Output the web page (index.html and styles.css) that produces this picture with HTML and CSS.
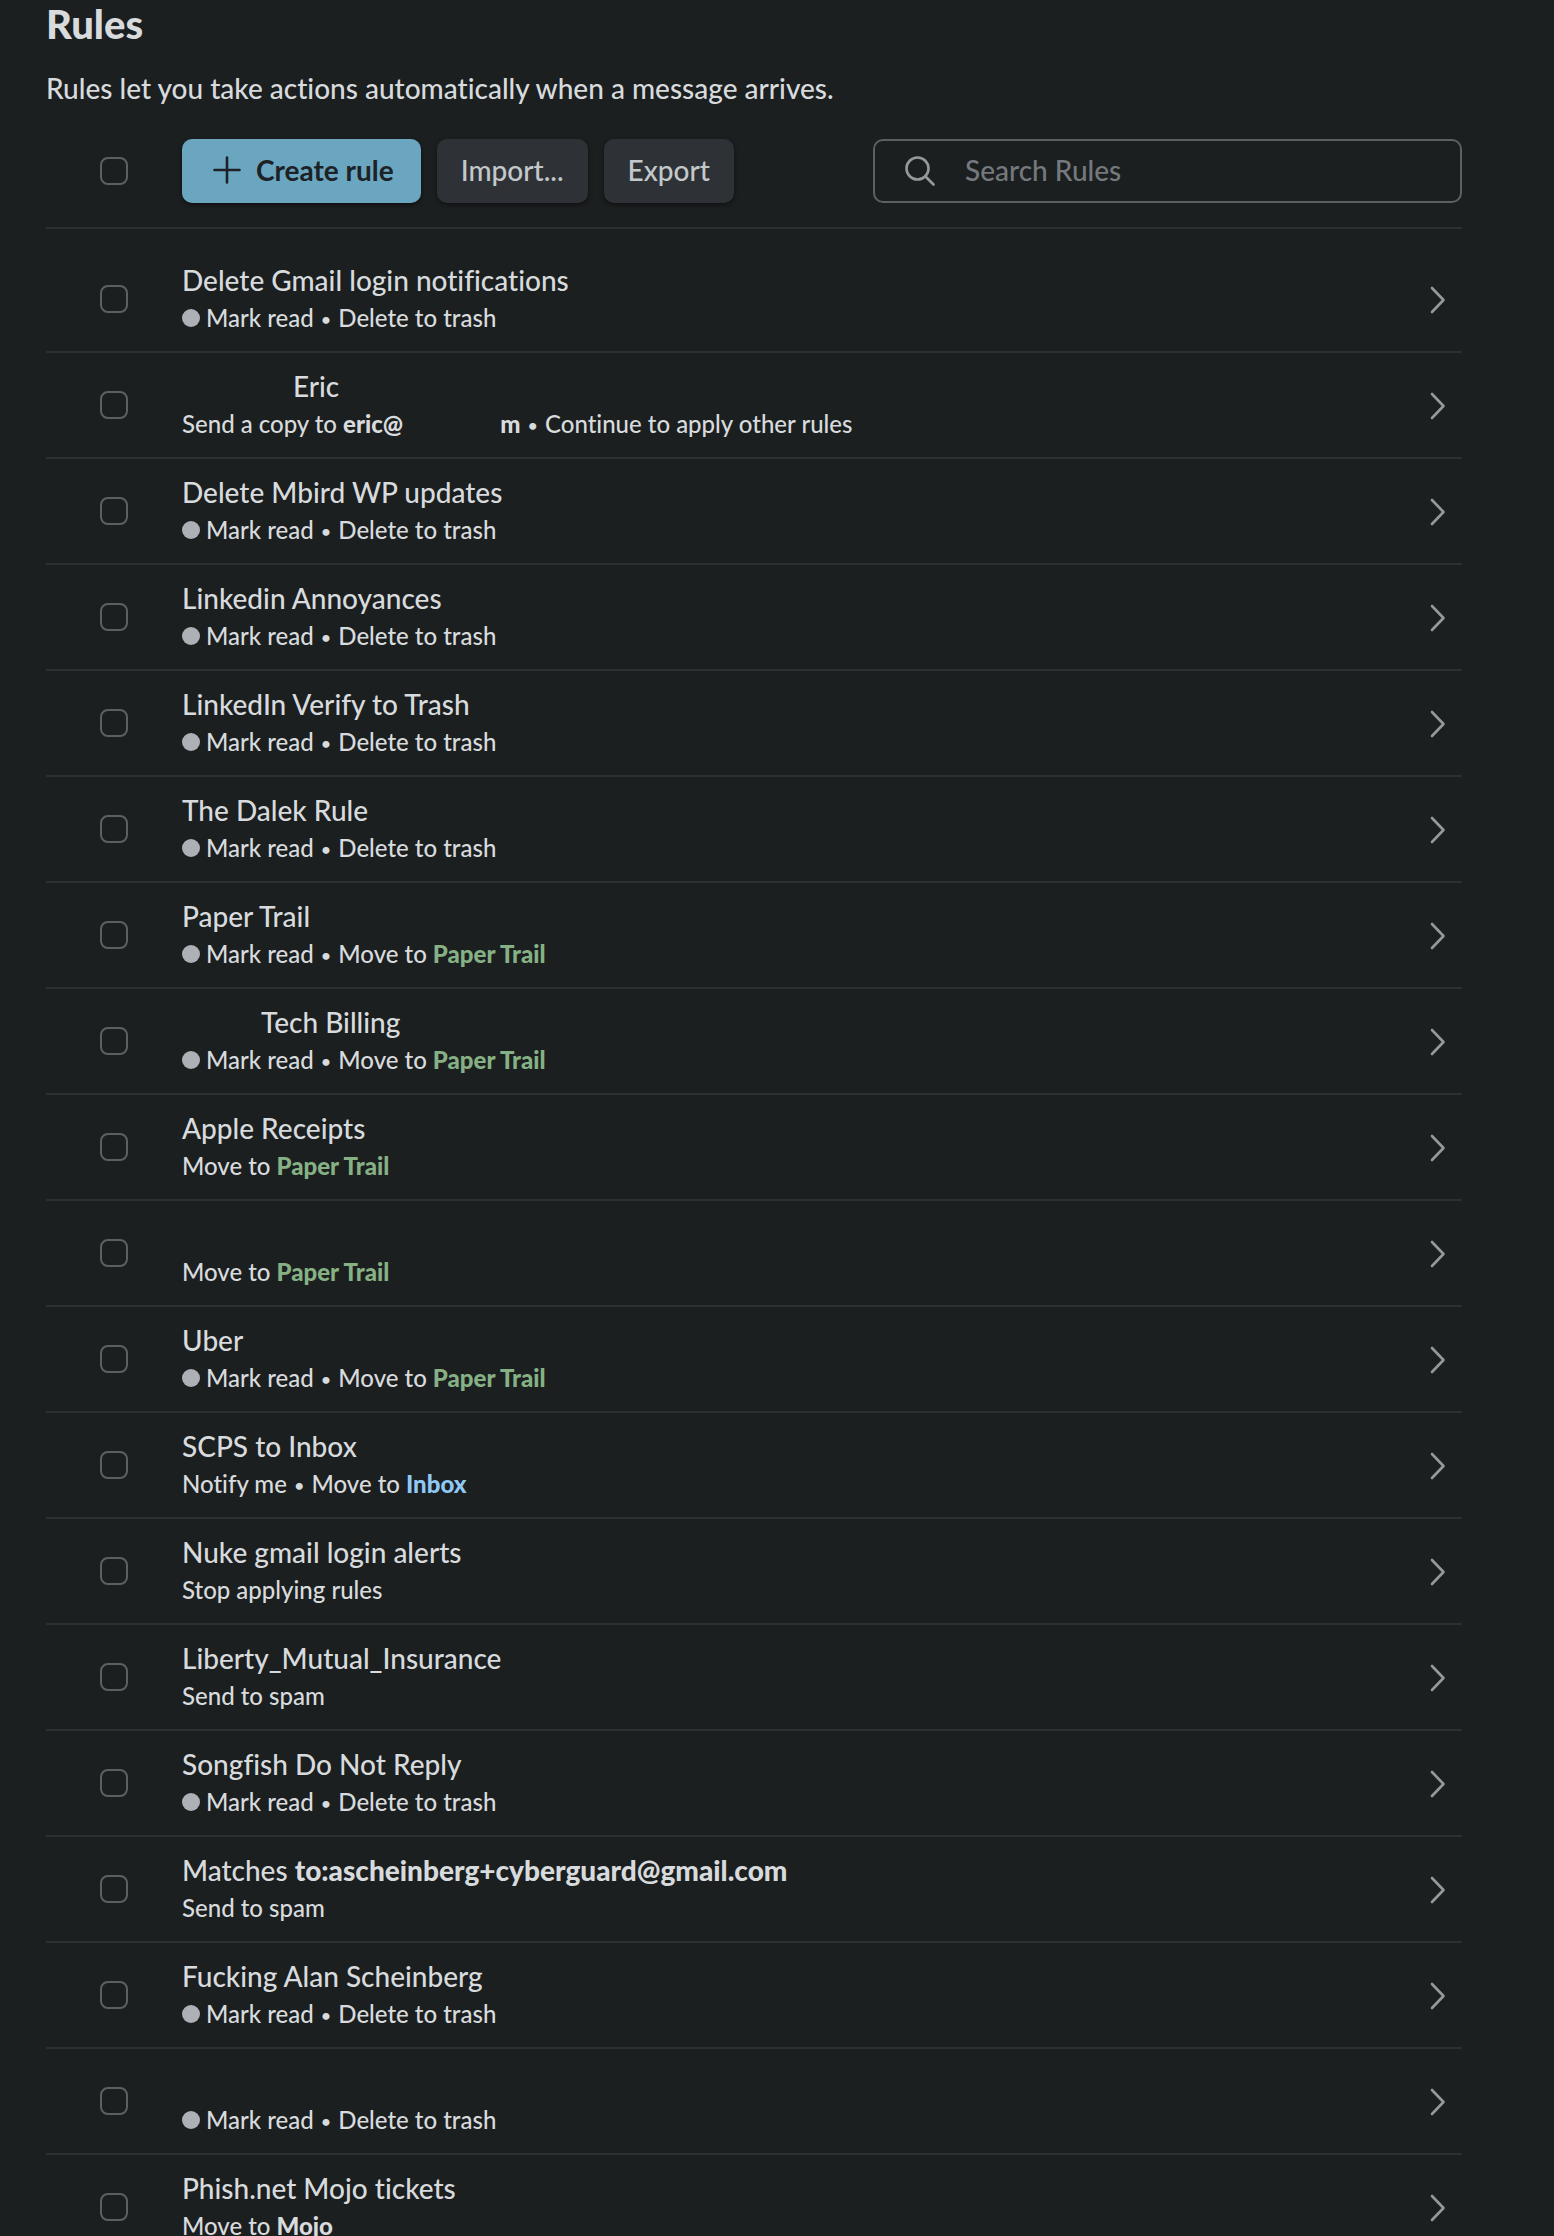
FILE: index.html
```html
<!DOCTYPE html>
<html lang="en">
<head>
    <meta charset="UTF-8">
    <meta name="viewport" content="width=device-width, initial-scale=1.0">
    <title>Rules</title>
    <link rel="stylesheet" href="styles.css">
</head>
<body>

    <!-- Shared icons -->
    <svg class="icon-defs" aria-hidden="true">
        <symbol id="chevron" viewBox="0 0 16 30">
            <path d="M2 4 L13.5 16 L2 28" fill="none" stroke="currentColor" stroke-width="2.6" stroke-linecap="round" stroke-linejoin="round"/>
        </symbol>
    </svg>

    <main class="settings">
        <h1>Rules</h1>
        <p class="intro">Rules let you take actions automatically when a message arrives.</p>

        <div class="toolbar">
            <input type="checkbox" class="check" aria-label="Select all rules">
            <div class="actions">
                <button type="button" class="btn btn-primary">
                    <svg class="plus" viewBox="0 0 28 28" aria-hidden="true">
                        <path d="M14 1.5 V26.5 M1.5 14 H26.5" fill="none" stroke="currentColor" stroke-width="2.6" stroke-linecap="round"/>
                    </svg>
                    Create rule
                </button>
                <button type="button" class="btn">Import...</button>
                <button type="button" class="btn">Export</button>
            </div>
            <label class="search">
                <svg class="search-icon" viewBox="0 0 30 30" aria-hidden="true">
                    <circle cx="12.5" cy="12.5" r="11" fill="none" stroke="currentColor" stroke-width="2.6"/>
                    <path d="M20.5 20.5 L28.5 28.5" fill="none" stroke="currentColor" stroke-width="2.6" stroke-linecap="round"/>
                </svg>
                <input type="search" placeholder="Search Rules" aria-label="Search Rules">
            </label>
        </div>

        <ul class="rules">
            <li class="rule">
                <input type="checkbox" class="check" aria-label="Select rule">
                <a href="#" class="rule-link">
                    <span class="rule-text">
                        <span class="name">Delete Gmail login notifications</span>
                        <span class="detail"><i class="dot"></i>Mark read <span class="sep">•</span> Delete to trash</span>
                    </span>
                    <svg class="chevron"><use href="#chevron"/></svg>
                </a>
            </li>
            <li class="rule">
                <input type="checkbox" class="check" aria-label="Select rule">
                <a href="#" class="rule-link">
                    <span class="rule-text">
                        <span class="name"><span class="blank blank-lg"></span>Eric</span>
                        <span class="detail">Send a copy to <b>eric@<span class="blank blank-md"></span>m</b> <span class="sep">•</span> Continue to apply other rules</span>
                    </span>
                    <svg class="chevron"><use href="#chevron"/></svg>
                </a>
            </li>
            <li class="rule">
                <input type="checkbox" class="check" aria-label="Select rule">
                <a href="#" class="rule-link">
                    <span class="rule-text">
                        <span class="name">Delete Mbird WP updates</span>
                        <span class="detail"><i class="dot"></i>Mark read <span class="sep">•</span> Delete to trash</span>
                    </span>
                    <svg class="chevron"><use href="#chevron"/></svg>
                </a>
            </li>
            <li class="rule">
                <input type="checkbox" class="check" aria-label="Select rule">
                <a href="#" class="rule-link">
                    <span class="rule-text">
                        <span class="name">Linkedin Annoyances</span>
                        <span class="detail"><i class="dot"></i>Mark read <span class="sep">•</span> Delete to trash</span>
                    </span>
                    <svg class="chevron"><use href="#chevron"/></svg>
                </a>
            </li>
            <li class="rule">
                <input type="checkbox" class="check" aria-label="Select rule">
                <a href="#" class="rule-link">
                    <span class="rule-text">
                        <span class="name">LinkedIn Verify to Trash</span>
                        <span class="detail"><i class="dot"></i>Mark read <span class="sep">•</span> Delete to trash</span>
                    </span>
                    <svg class="chevron"><use href="#chevron"/></svg>
                </a>
            </li>
            <li class="rule">
                <input type="checkbox" class="check" aria-label="Select rule">
                <a href="#" class="rule-link">
                    <span class="rule-text">
                        <span class="name">The Dalek Rule</span>
                        <span class="detail"><i class="dot"></i>Mark read <span class="sep">•</span> Delete to trash</span>
                    </span>
                    <svg class="chevron"><use href="#chevron"/></svg>
                </a>
            </li>
            <li class="rule">
                <input type="checkbox" class="check" aria-label="Select rule">
                <a href="#" class="rule-link">
                    <span class="rule-text">
                        <span class="name">Paper Trail</span>
                        <span class="detail"><i class="dot"></i>Mark read <span class="sep">•</span> Move to <b class="green">Paper Trail</b></span>
                    </span>
                    <svg class="chevron"><use href="#chevron"/></svg>
                </a>
            </li>
            <li class="rule">
                <input type="checkbox" class="check" aria-label="Select rule">
                <a href="#" class="rule-link">
                    <span class="rule-text">
                        <span class="name"><span class="blank blank-sm"></span>Tech Billing</span>
                        <span class="detail"><i class="dot"></i>Mark read <span class="sep">•</span> Move to <b class="green">Paper Trail</b></span>
                    </span>
                    <svg class="chevron"><use href="#chevron"/></svg>
                </a>
            </li>
            <li class="rule">
                <input type="checkbox" class="check" aria-label="Select rule">
                <a href="#" class="rule-link">
                    <span class="rule-text">
                        <span class="name">Apple Receipts</span>
                        <span class="detail">Move to <b class="green">Paper Trail</b></span>
                    </span>
                    <svg class="chevron"><use href="#chevron"/></svg>
                </a>
            </li>
            <li class="rule">
                <input type="checkbox" class="check" aria-label="Select rule">
                <a href="#" class="rule-link">
                    <span class="rule-text">
                        <span class="name"></span>
                        <span class="detail">Move to <b class="green">Paper Trail</b></span>
                    </span>
                    <svg class="chevron"><use href="#chevron"/></svg>
                </a>
            </li>
            <li class="rule">
                <input type="checkbox" class="check" aria-label="Select rule">
                <a href="#" class="rule-link">
                    <span class="rule-text">
                        <span class="name">Uber</span>
                        <span class="detail"><i class="dot"></i>Mark read <span class="sep">•</span> Move to <b class="green">Paper Trail</b></span>
                    </span>
                    <svg class="chevron"><use href="#chevron"/></svg>
                </a>
            </li>
            <li class="rule">
                <input type="checkbox" class="check" aria-label="Select rule">
                <a href="#" class="rule-link">
                    <span class="rule-text">
                        <span class="name">SCPS to Inbox</span>
                        <span class="detail">Notify me <span class="sep">•</span> Move to <b class="blue">Inbox</b></span>
                    </span>
                    <svg class="chevron"><use href="#chevron"/></svg>
                </a>
            </li>
            <li class="rule">
                <input type="checkbox" class="check" aria-label="Select rule">
                <a href="#" class="rule-link">
                    <span class="rule-text">
                        <span class="name">Nuke gmail login alerts</span>
                        <span class="detail">Stop applying rules</span>
                    </span>
                    <svg class="chevron"><use href="#chevron"/></svg>
                </a>
            </li>
            <li class="rule">
                <input type="checkbox" class="check" aria-label="Select rule">
                <a href="#" class="rule-link">
                    <span class="rule-text">
                        <span class="name">Liberty_Mutual_Insurance</span>
                        <span class="detail">Send to spam</span>
                    </span>
                    <svg class="chevron"><use href="#chevron"/></svg>
                </a>
            </li>
            <li class="rule">
                <input type="checkbox" class="check" aria-label="Select rule">
                <a href="#" class="rule-link">
                    <span class="rule-text">
                        <span class="name">Songfish Do Not Reply</span>
                        <span class="detail"><i class="dot"></i>Mark read <span class="sep">•</span> Delete to trash</span>
                    </span>
                    <svg class="chevron"><use href="#chevron"/></svg>
                </a>
            </li>
            <li class="rule">
                <input type="checkbox" class="check" aria-label="Select rule">
                <a href="#" class="rule-link">
                    <span class="rule-text">
                        <span class="name">Matches <b>to:ascheinberg+cyberguard@gmail.com</b></span>
                        <span class="detail">Send to spam</span>
                    </span>
                    <svg class="chevron"><use href="#chevron"/></svg>
                </a>
            </li>
            <li class="rule">
                <input type="checkbox" class="check" aria-label="Select rule">
                <a href="#" class="rule-link">
                    <span class="rule-text">
                        <span class="name">Fucking Alan Scheinberg</span>
                        <span class="detail"><i class="dot"></i>Mark read <span class="sep">•</span> Delete to trash</span>
                    </span>
                    <svg class="chevron"><use href="#chevron"/></svg>
                </a>
            </li>
            <li class="rule">
                <input type="checkbox" class="check" aria-label="Select rule">
                <a href="#" class="rule-link">
                    <span class="rule-text">
                        <span class="name"></span>
                        <span class="detail"><i class="dot"></i>Mark read <span class="sep">•</span> Delete to trash</span>
                    </span>
                    <svg class="chevron"><use href="#chevron"/></svg>
                </a>
            </li>
            <li class="rule">
                <input type="checkbox" class="check" aria-label="Select rule">
                <a href="#" class="rule-link">
                    <span class="rule-text">
                        <span class="name">Phish.net Mojo tickets</span>
                        <span class="detail">Move to <b>Mojo</b></span>
                    </span>
                    <svg class="chevron"><use href="#chevron"/></svg>
                </a>
            </li>
        </ul>
    </main>

</body>
</html>
```
FILE: styles.css
```css
* {
    box-sizing: border-box;
}

body {
    margin: 0;
    height: 100vh;
    overflow: hidden;
    background-color: #1c1f20;
    color: #d8dbdd;
    font-family: Lato, 'Open Sans', sans-serif;
    font-size: 28px;
    font-weight: 500;
    font-variant-ligatures: no-common-ligatures;
    line-height: 40px;
}

b {
    font-weight: 900;
}

.icon-defs {
    display: none;
}

.settings {
    padding: 0 92px 0 46px;
}

h1 {
    margin: 0 0 20px;
    font-size: 40px;
    font-weight: 900;
    line-height: 48px;
}

.intro {
    margin: 0 0 31px;
}

/* Toolbar */
.toolbar {
    display: flex;
    align-items: center;
    padding: 0 0 24px 54px;
    border-bottom: 2px solid #2d3032;
}

.check {
    appearance: none;
    flex: none;
    width: 28px;
    height: 28px;
    margin: 0 54px 0 0;
    border: 2px solid #5b6064;
    border-radius: 8px;
}

.check:checked {
    background-color: #6ba6c1;
}

.actions {
    display: flex;
    flex: 1;
    gap: 16px;
}

.btn {
    display: flex;
    align-items: center;
    height: 64px;
    padding: 0 24px 2px;
    border: none;
    border-radius: 10px;
    background-color: #2e3236;
    color: #c3c8cb;
    font: inherit;
    white-space: nowrap;
    box-shadow: 0 2px 4px rgba(0, 0, 0, 0.5);
    cursor: pointer;
}

.btn-primary {
    gap: 15px;
    padding-left: 31px;
    padding-right: 27px;
    background-color: #6ba6c1;
    color: #1c2226;
    font-weight: bold;
}

.plus {
    width: 28px;
    height: 28px;
}

.search {
    display: flex;
    align-items: center;
    gap: 30px;
    width: 589px;
    height: 64px;
    padding: 0 30px;
    border: 2px solid #5b6064;
    border-radius: 10px;
}

.search-icon {
    flex: none;
    width: 30px;
    height: 30px;
    color: #96999b;
}

.search input {
    flex: 1;
    min-width: 0;
    padding: 0 0 2px;
    border: none;
    outline: none;
    background: none;
    color: inherit;
    font: inherit;
}

.search input::placeholder {
    color: #74797d;
}

/* Rule list */
.rules {
    margin: 0;
    padding: 18px 0 0;
    list-style: none;
}

.rule {
    display: flex;
    align-items: center;
    padding: 13px 0 13px 54px;
    border-bottom: 2px solid #2d3032;
}

.rule-link {
    display: flex;
    flex: 1;
    align-items: center;
    justify-content: space-between;
    color: inherit;
    text-decoration: none;
}

.rule-text {
    padding-bottom: 2px;
}

.name,
.detail {
    display: block;
}

.name {
    min-height: 40px;
}

.detail {
    font-size: 24px;
    line-height: 36px;
}

.sep {
    margin: 0 1px;
    font-size: 18px;
    line-height: 1;
    vertical-align: 1px;
}

.dot {
    display: inline-block;
    width: 18px;
    height: 18px;
    margin-right: 6px;
    border-radius: 50%;
    background-color: #adb1b5;
    vertical-align: baseline;
}

.green {
    color: #86b184;
}

.blue {
    color: #90c8f6;
}

.chevron {
    flex: none;
    width: 16px;
    height: 30px;
    margin-right: 16px;
    color: #96999b;
}

/* Removed parts of a name or address */
.blank {
    display: inline-block;
}

.blank-sm {
    width: 79px;
}

.blank-md {
    width: 97px;
}

.blank-lg {
    width: 111px;
}
```
